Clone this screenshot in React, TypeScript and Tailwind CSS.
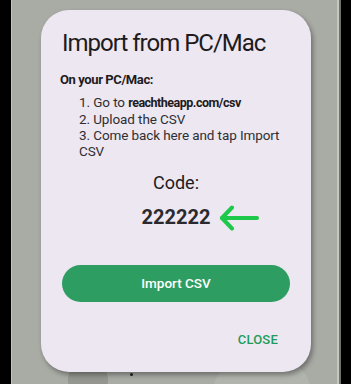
import React from "react";

function ArrowLeft() {
  return (
    <svg
      width="40"
      height="26"
      viewBox="0 0 40 26"
      fill="none"
      stroke="#1ec84a"
      strokeWidth="4"
      strokeLinecap="round"
      strokeLinejoin="round"
      className="absolute left-full top-[2px] ml-[9px]"
    >
      <path d="M38 13H3" />
      <path d="M13 2.5L3 13l10 10.5" />
    </svg>
  );
}

export default function App() {
  return (
    <div
      className="flex h-[384px] w-[351px] overflow-hidden bg-black"
      style={{ fontFamily: "Roboto, 'Noto Sans', sans-serif" }}
    >
      <div className="w-[11px] shrink-0 bg-black" />
      <div className="w-px shrink-0 bg-[#c3c5bf]" />
      <div className="relative flex-1 bg-[#a9aba5]">
        {/* faded content behind the dialog */}
        <div className="absolute left-[56px] top-[360px] h-[40px] w-[40px] rounded-full bg-[#94968f]" />
        <div className="absolute left-[118px] top-[373px] h-[3px] w-[3px] rounded-full bg-[#222]" />
        <div className="absolute left-[200px] top-[356px] h-[80px] w-[100px] rounded-full bg-[#b1b3ad]" />

        <div className="relative ml-[29px] mt-[10px] flex h-[362px] w-[270px] flex-col rounded-[28px] bg-[#ede7f1] shadow-[2px_3px_5px_rgba(0,0,0,0.35)]">
          <h1 className="pl-[21px] pt-[17px] text-[24px] font-normal leading-[32px] tracking-[-1px] text-[#1d1b20]">
            Import from PC/Mac
          </h1>

          <div className="mt-[13px] pl-[19px] pr-[14px] text-[13.5px] leading-[16px] tracking-[-0.1px] text-[#2f2f33]">
            <p className="text-[13px] font-bold tracking-[-0.4px] text-[#1d1b20]">On your PC/Mac:</p>
            <ol className="mt-[6px] pl-[19px]">
              <li>
                1. Go to{" "}
                <span className="text-[12.5px] font-bold tracking-[-0.5px] text-[#1d1b20]">
                  reachtheapp.com/csv
                </span>
              </li>
              <li>2. Upload the CSV</li>
              <li>3. Come back here and tap Import CSV</li>
            </ol>
          </div>

          <p className="mt-[12px] text-center text-[18px] leading-[24px] text-[#1d1b20]">Code:</p>
          <div className="mt-[8px] flex justify-center">
            <span className="relative text-[20px] font-bold leading-[28px] text-[#2a2a2e]">
              222222
              <ArrowLeft />
            </span>
          </div>

          <button className="mx-[21px] mt-[34px] flex h-[37px] items-center justify-center rounded-full bg-[#2e9d62] text-[13.5px] font-medium text-white">
            Import CSV
          </button>

          <div className="mt-[30px] flex justify-end pr-[33px]">
            <span className="text-[13px] font-medium leading-[16px] tracking-[0.2px] text-[#1e9c5b]">
              CLOSE
            </span>
          </div>
        </div>
      </div>
      <div className="w-[2px] shrink-0 bg-[#c5c7c1]" />
      <div className="w-[2px] shrink-0 bg-[#6f716d]" />
      <div className="w-[10px] shrink-0 bg-black" />
    </div>
  );
}
